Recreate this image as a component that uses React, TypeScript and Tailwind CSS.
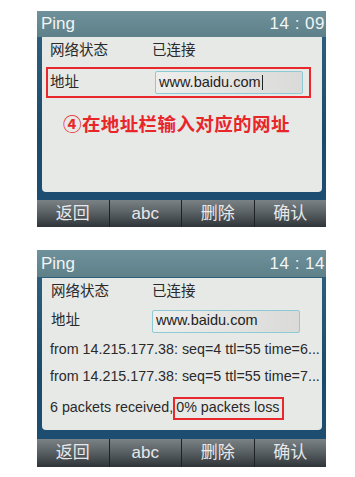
import React from 'react';

const font = { fontFamily: '"Liberation Sans", "Noto Sans CJK SC", sans-serif' };

const SoftKeys: React.FC = () => (
  <div className="flex h-full">
    {['返回', 'abc', '删除', '确认'].map((k, i) => (
      <div
        key={k}
        className={`flex-1 flex items-center justify-center text-[17px] text-[#e6e8ea] bg-[linear-gradient(180deg,#7b8286_0%,#5b6266_45%,#2e3438_100%)] ${
          i > 0 ? 'border-l border-[#1e2226]' : ''
        }`}
      >
        {k}
      </div>
    ))}
  </div>
);

const TitleBar: React.FC<{ time: string; h: string }> = ({ time, h }) => (
  <div
    className={`${h} flex items-center justify-between pl-[4px] pr-[1px] text-[17px] text-[#f2f4f4] bg-[linear-gradient(180deg,#6f919b_0%,#5d8089_100%)]`}
  >
    <span>Ping</span>
    <span className="tracking-[0.5px]">{time}</span>
  </div>
);

const InputBox: React.FC<{ cursor?: boolean }> = ({ cursor }) => (
  <div className="w-[148px] h-[23px] flex items-center pl-[3px] rounded-[2px] border border-[#8ec9d6] bg-[linear-gradient(90deg,#eeeeec_0%,#dadad8_100%)] text-[14.5px] text-[#222]">
    www.baidu.com
    {cursor && <span className="ml-[1px] w-[1.5px] h-[15px] bg-[#222]" />}
  </div>
);

export default function App() {
  return (
    <div className="w-[355px] h-[477px] bg-white overflow-hidden" style={font}>
      {/* 第一屏 */}
      <div className="ml-[37px] mt-[11px] w-[289px] h-[216px] flex flex-col bg-[#1c4c6c]">
        <TitleBar time="14 : 09" h="h-[26px]" />
        <div className="flex-1 flex flex-col pl-[5px] pr-[4px] bg-[linear-gradient(180deg,#2d5f7c_0%,#1b4a6b_60%,#1d4e72_100%)]">
          <div className="h-[155px] rounded-b-[4px] bg-[#e7e9e7] flex flex-col text-[14.5px] text-[#2a2a2a]">
            <div className="h-[28px] flex items-center pl-[8px]">
              <span className="w-[102px]">网络状态</span>
              <span>已连接</span>
            </div>
            <div className="ml-[4px] mr-[11px] mt-[2px] h-[31px] border-2 border-[#e8282c] flex items-center pl-[2px]">
              <span className="w-[105px]">地址</span>
              <InputBox cursor />
            </div>
            <div
              className="mt-[12px] pl-[21px] text-[18.5px] font-bold text-[#e8262a] tracking-[0.4px]"
              style={{ fontFamily: '"Noto Sans CJK SC", sans-serif' }}
            >
              ④在地址栏输入对应的网址
            </div>
          </div>
          <div className="flex-1" />
        </div>
        <div className="h-[27px]">
          <SoftKeys />
        </div>
      </div>

      {/* 第二屏 */}
      <div className="ml-[37px] mt-[23px] w-[289px] h-[217px] flex flex-col bg-[#1c4c6c]">
        <TitleBar time="14 : 14" h="h-[27px]" />
        <div className="flex-1 flex flex-col pl-[5px] pr-[4px] bg-[linear-gradient(180deg,#2d5f7c_0%,#1b4a6b_60%,#1d4e72_100%)]">
          <div className="mt-[1px] h-[152px] rounded-b-[4px] bg-[#e7e9e7] flex flex-col text-[14.5px] text-[#2a2a2a] overflow-hidden">
            <div className="h-[28px] flex items-center pl-[9px]">
              <span className="w-[101px]">网络状态</span>
              <span>已连接</span>
            </div>
            <div className="h-[30px] flex items-center pl-[9px]">
              <span className="w-[101px]">地址</span>
              <InputBox />
            </div>
            <div className="h-[28px] flex items-center pl-[8px] whitespace-nowrap text-[14.3px]">
              from 14.215.177.38: seq=4 ttl=55 time=6...
            </div>
            <div className="h-[26px] flex items-center pl-[8px] whitespace-nowrap text-[14.3px]">
              from 14.215.177.38: seq=5 ttl=55 time=7...
            </div>
            <div className="h-[36px] flex items-center pl-[8px] whitespace-nowrap text-[14.3px]">
              6 packets received,
              <span className="pl-[1px] pr-[2px] h-[23px] flex items-center border-2 border-[#e8282c]">
                0% packets loss
              </span>
            </div>
          </div>
          <div className="flex-1" />
        </div>
        <div className="h-[28px]">
          <SoftKeys />
        </div>
      </div>
    </div>
  );
}
